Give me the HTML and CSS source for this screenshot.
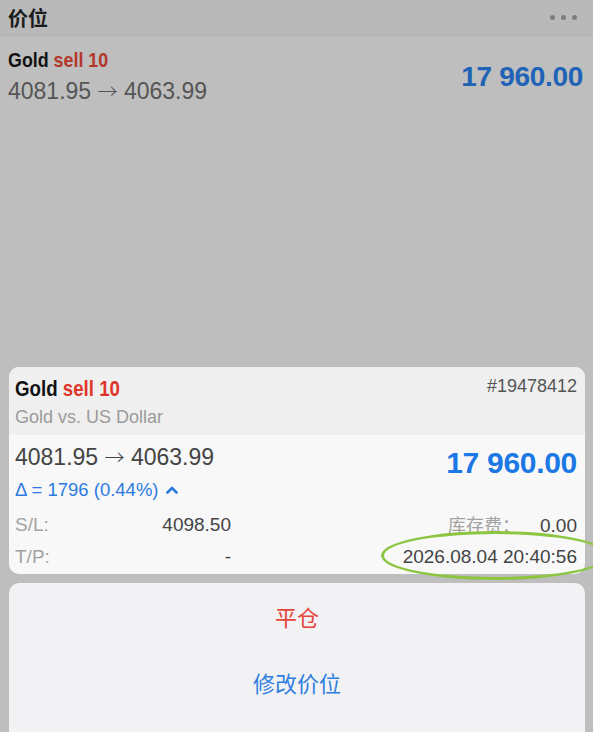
FILE: index.html
```html
<!DOCTYPE html>
<html lang="zh-CN">
<head>
    <meta charset="UTF-8">
    <meta name="viewport" content="width=device-width, initial-scale=1.0">
    <title>价位</title>
    <link rel="stylesheet" href="styles.css">
</head>
<body>
    <div class="screen">
        <header class="topbar">
            <span class="topbar-title">价位</span>
            <span class="more"><i></i><i></i><i></i></span>
        </header>

        <div class="position-row">
            <div class="position-info">
                <div class="symbol"><span class="symbol-text">Gold <span class="side">sell 10</span></span></div>
                <div class="prices">4081.95 <span class="arrow">→</span> 4063.99</div>
            </div>
            <div class="profit">17 960.00</div>
        </div>

        <!-- Detalle de la posición -->
        <section class="detail-card">
            <div class="detail-head">
                <div class="detail-names">
                    <div class="symbol symbol-lg"><span class="symbol-text">Gold <span class="side">sell 10</span></span></div>
                    <div class="description">Gold vs. US Dollar</div>
                </div>
                <div class="ticket">#19478412</div>
            </div>
            <div class="detail-body">
                <div class="detail-main">
                    <div>
                        <div class="prices prices-card">4081.95 <span class="arrow">→</span> 4063.99</div>
                        <div class="delta">
                            Δ = 1796 (0.44%)
                            <svg class="chevron" width="12" height="8" viewBox="0 0 12 8">
                                <polyline points="1.5,6.5 6,2 10.5,6.5" fill="none" stroke="#2b7be0" stroke-width="2.6" stroke-linecap="round" stroke-linejoin="round"/>
                            </svg>
                        </div>
                    </div>
                    <div class="profit profit-lg">17 960.00</div>
                </div>
                <div class="field-row">
                    <div class="field"><span class="label">S/L:</span><span class="value">4098.50</span></div>
                    <div class="field field-right"><span class="label">库存费：</span><span class="value">0.00</span></div>
                </div>
                <div class="field-row">
                    <div class="field"><span class="label">T/P:</span><span class="value">-</span></div>
                    <div class="field field-right"><span class="value">2026.08.04 20:40:56</span></div>
                </div>
            </div>
        </section>

        <!-- Menú de acciones -->
        <section class="action-sheet">
            <div class="action action-close">平仓</div>
            <div class="action action-modify">修改价位</div>
        </section>

        <div class="highlight"></div>
    </div>
</body>
</html>
```

FILE: styles.css
```css
/* Estilos generales */
body, html {
    margin: 0;
    padding: 0;
    background-color: #bebebe;
    font-family: "Liberation Sans", Arial, "Noto Sans CJK SC", sans-serif;
}

.screen {
    position: relative;
    width: 593px;
    height: 732px;
    overflow: hidden;
    background-color: #bebebe;
}

/* Barra superior */
.topbar {
    display: flex;
    justify-content: space-between;
    align-items: center;
    height: 36px;
    padding: 0 16px 0 8px;
    background-color: #b9b9b9;
    border-bottom: 1px solid #b3b3b3;
    box-sizing: border-box;
}

.topbar-title {
    font-family: "Noto Sans CJK SC", sans-serif;
    font-size: 20px;
    font-weight: bold;
    color: #1b1b1b;
}

.more {
    display: flex;
    gap: 6px;
}

.more i {
    width: 5px;
    height: 5px;
    border-radius: 50%;
    background-color: #7d7d7d;
}

/* Fila de la posición */
.position-row {
    display: flex;
    justify-content: space-between;
    align-items: center;
    padding: 10px 10px 0 8px;
}

.symbol {
    font-size: 21px;
    font-weight: bold;
    color: #111;
    line-height: 28px;
}

/* texto estrecho como en la app */
.symbol-text {
    display: inline-block;
    transform: scaleX(0.85);
    transform-origin: left center;
    white-space: nowrap;
}

.side {
    color: #b4372c;
}

.prices {
    font-size: 23px;
    color: #555;
    line-height: 33px;
}

.arrow {
    font-family: "Noto Sans CJK SC", sans-serif;
    font-weight: 300;
    font-size: 20px;
}

.profit {
    font-size: 28px;
    font-weight: bold;
    color: #1f63b6;
    letter-spacing: -0.3px;
}

/* Tarjeta de detalle */
.detail-card {
    margin: 259px 8px 0 9px;
    border-radius: 10px;
    overflow: hidden;
    background-color: #f8f8f8;
}

.detail-head {
    display: flex;
    justify-content: space-between;
    height: 68px;
    padding: 8px 8px 0 6px;
    box-sizing: border-box;
    background-color: #efefef;
}

.symbol-lg {
    font-size: 22px;
}

.symbol-lg .side {
    color: #e0352b;
}

.description {
    font-size: 18px;
    color: #9b9b9b;
    line-height: 29px;
}

.ticket {
    font-size: 18px;
    color: #555;
    line-height: 22px;
}

.detail-body {
    padding: 8px 8px 1px 6px;
}

.detail-main {
    display: flex;
    justify-content: space-between;
    align-items: flex-start;
    margin-bottom: 7px;
}

.prices-card {
    color: #444;
    line-height: 28px;
}

.delta {
    display: flex;
    align-items: center;
    gap: 7px;
    margin-top: 7px;
    font-size: 18.5px;
    color: #2b7be0;
    line-height: 24px;
}

.profit-lg {
    font-size: 30px;
    color: #1c78e4;
    margin-top: 2px;
    line-height: 36px;
}

.field-row {
    display: flex;
    justify-content: space-between;
    height: 32px;
    align-items: center;
    font-size: 19px;
}

.field {
    display: flex;
    justify-content: space-between;
    align-items: baseline;
    width: 216px;
}

.field-right {
    width: auto;
    gap: 20px;
}

.label {
    color: #a2a2a2;
}

.field-right .label {
    font-family: "Noto Sans CJK SC", sans-serif;
    font-size: 18px;
    line-height: 22px;
}

.value {
    color: #444;
}

/* Menú de acciones */
.action-sheet {
    margin: 9px 8px 0 9px;
    height: 170px;
    border-radius: 10px;
    background-color: #f2f2f4;
    font-family: "Noto Sans CJK SC", sans-serif;
    font-size: 22px;
    text-align: center;
}

.action {
    height: 66px;
    line-height: 66px;
}

.action-close {
    color: #e5443a;
}

.action-modify {
    color: #2f7fe0;
}

/* Marca verde alrededor de la fecha */
.highlight {
    position: absolute;
    left: 381px;
    top: 531px;
    width: 222px;
    height: 43px;
    border: 3px solid #8cc641;
    border-radius: 50%;
}
```
